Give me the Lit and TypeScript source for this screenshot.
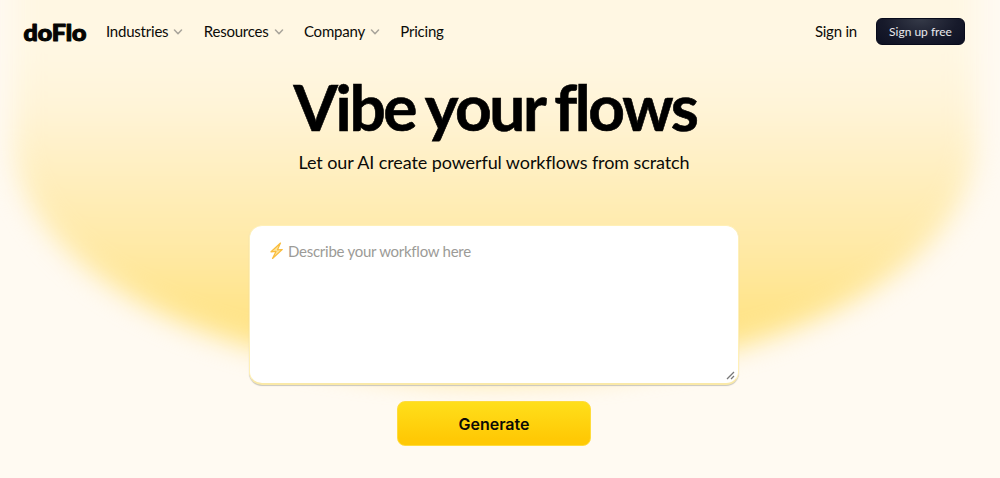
import { LitElement, css, html, svg } from "lit";
import { customElement, property } from "lit/decorators.js";

@customElement("nav-item")
export class NavItem extends LitElement {
    @property() label = "";
    @property({ type: Boolean }) menu = false;

    static styles = css`
        :host {
            display: flex;
            align-items: center;
            gap: 5px;
            white-space: nowrap;
        }
        .chevron {
            width: 10px;
            height: 6px;
            margin-top: 2px;
            fill: none;
            stroke: #a8a49b;
            stroke-width: 1.5;
            stroke-linecap: round;
            stroke-linejoin: round;
        }
    `
    render() {
        return html`
            <span>${this.label}</span>
            ${this.menu ? html`<svg class="chevron" viewBox="0 0 10 6">${svg`<path d="M1.5 1 5 4.7 8.5 1" />`}</svg>` : ""}
        `
    }
}

@customElement("app-root")
export class AppRoot extends LitElement {
    static styles = css`
        :host {
            display: block;
            position: relative;
            height: 478px;
            overflow: hidden;
            background-color: #fffaf2;
            color: #0b0b08;
            font-family: Lato, sans-serif;
        }
        .glow {
            position: absolute;
            top: -60px;
            left: 13px;
            width: 963px;
            height: 440px;
            border-radius: 0 0 50% 50% / 0 0 240px 240px;
            background: linear-gradient(#fff7e3 0, #fff7e3 110px, #fff4d8 165px, #ffeebd 240px, #ffe9a5 310px, #ffe48a 370px, #ffe284 100%);
            filter: blur(13px);
        }
        .page {
            position: relative;
            display: flex;
            flex-direction: column;
        }
        header {
            box-sizing: border-box;
            height: 63px;
            padding: 0 35px 0 23px;
            display: flex;
            align-items: center;
            font-size: 15px;
            letter-spacing: -0.22px;
        }
        .logo {
            width: 64px;
            height: 28px;
            margin-right: 19px;
            overflow: visible;
            font-family: Lato, sans-serif;
            font-size: 23px;
            font-weight: 900;
            letter-spacing: 0;
            fill: #050503;
            stroke: #050503;
            stroke-width: 1.1;
            stroke-linejoin: round;
        }
        nav {
            flex: 1;
            display: flex;
            gap: 20.4px;
            padding-bottom: 1px;
        }
        .signin {
            margin-right: 19px;
            padding-bottom: 1px;
        }
        .signup {
            width: 89px;
            height: 27px;
            padding: 0;
            border: 1px solid #080b1c;
            border-radius: 6px;
            background: radial-gradient(ellipse at 50% 0, #353a48, #171a2b 60%, #0d1022);
            color: #e9e9ec;
            font: 12px Lato, sans-serif;
        }
        main {
            padding-right: 12px;
            display: flex;
            flex-direction: column;
            align-items: center;
        }
        h1 {
            margin: 5px 0 0;
            padding-left: 2px;
            font-size: 64px;
            line-height: 78px;
            font-weight: 700;
            letter-spacing: -2.4px;
            word-spacing: -2px;
            color: #000;
            -webkit-text-stroke: 0.6px #000;
        }
        .subtitle {
            margin: 4px 0 0;
            font-size: 18px;
            line-height: 24px;
            letter-spacing: -0.1px;
        }
        .prompt {
            box-sizing: border-box;
            width: 490px;
            height: 160px;
            margin-top: 51px;
            padding: 15px 19px;
            display: flex;
            align-items: flex-start;
            gap: 4px;
            position: relative;
            border: 1px solid #fff0b8;
            border-bottom: 2px solid #fae9a8;
            border-radius: 13px;
            background-color: #fff;
            box-shadow: 0 1px 1px #c9c6be;
            color: #9c9b97;
            font-size: 15px;
            line-height: 20px;
            letter-spacing: -0.26px;
        }
        .bolt {
            width: 15px;
            height: 18px;
            margin-top: 1px;
        }
        .grip {
            position: absolute;
            right: 3px;
            bottom: 3px;
            width: 9px;
            height: 9px;
            stroke: #777;
            stroke-width: 1.3;
        }
        .generate {
            width: 194px;
            height: 45px;
            margin-top: 16px;
            border: 1px solid #ffdc3c;
            border-radius: 8px;
            background: linear-gradient(#ffdf1b, #ffc905 85%);
            color: #0b0b05;
            font: 600 16px Inter, sans-serif;
        }
    `
    render() {
        return html`
            <div class="glow"></div>
            <div class="page">
                <header>
                    <svg class="logo" viewBox="0 0 64 28" role="img" aria-label="doFlo">
                        <text x="0.5" y="22.5" textLength="63" lengthAdjust="spacingAndGlyphs">doFlo</text>
                    </svg>
                    <nav>
                        <nav-item label="Industries" menu></nav-item>
                        <nav-item label="Resources" menu></nav-item>
                        <nav-item label="Company" menu></nav-item>
                        <nav-item label="Pricing"></nav-item>
                    </nav>
                    <span class="signin">Sign in</span>
                    <button class="signup">Sign up free</button>
                </header>
                <main>
                    <h1>Vibe your flows</h1>
                    <p class="subtitle">Let our AI create powerful workflows from scratch</p>
                    <div class="prompt">
                        <svg class="bolt" viewBox="0 0 15 18">
                            <path d="M11.5 1 2 9.8 7 9.4 3.5 16.5 13.2 7.5 8.5 7.8Z" fill="#ffe49a" stroke="#f9bd3e" stroke-width="1.2" stroke-linejoin="round" />
                        </svg>
                        <span>Describe your workflow here</span>
                        <svg class="grip" viewBox="0 0 9 9">
                            <path d="M1 8 8 1M5 8 8 5" />
                        </svg>
                    </div>
                    <button class="generate">Generate</button>
                </main>
            </div>
        `
    }
}
